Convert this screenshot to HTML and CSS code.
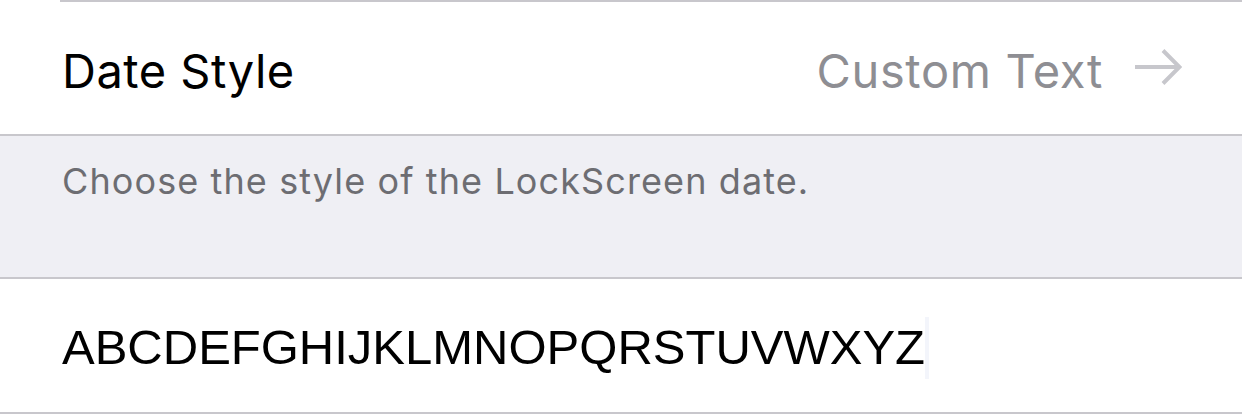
FILE: index.html
```html
<!DOCTYPE html>
<html>
<head>
<meta charset="utf-8">
<link rel="stylesheet" href="styles.css">
</head>
<body>
<div class="sep inset"></div>
<div class="row">
  <span class="label">Date Style</span>
  <span class="value">Custom Text</span>
  <svg class="arrow" width="48" height="38" viewBox="0 0 48 38"><path d="M1 19 H45.5 M29 2.5 L45.5 19 L29 35.5" fill="none" stroke="#c7c7cc" stroke-width="4" stroke-linecap="butt" stroke-linejoin="miter"/></svg>
</div>
<div class="sep"></div>
<div class="footer">Choose the style of the LockScreen date.</div>
<div class="sep"></div>
<div class="row input-row">
  <span class="field">ABCDEFGHIJKLMNOPQRSTUVWXYZ</span><span class="cursor"></span>
</div>
<div class="sep"></div>
</body>
</html>
```
FILE: styles.css
```css
html, body {
  margin: 0;
  padding: 0;
  background: #ffffff;
  width: 1242px;
  height: 414px;
  overflow: hidden;
}
.sep {
  height: 2px;
  background: #c8c7cc;
}
.sep.inset {
  margin-left: 60px;
}
.row {
  height: 132px;
  display: flex;
  align-items: center;
  padding: 0 60px 0 62px;
  background: #fff;
  font-family: Inter, Roboto, sans-serif;
}
.label {
  font-size: 47px;
  letter-spacing: 0.5px;
  color: #000;
  flex: 1;
  padding-top: 5px;
}
.value {
  font-size: 47px;
  letter-spacing: 0.65px;
  color: #8e8e93;
  margin-right: 31px;
  padding-top: 5px;
}
.arrow {
  display: block;
  margin-top: -2px;
}
.footer {
  height: 141px;
  box-sizing: border-box;
  background: #efeff4;
  padding: 23px 0 0 62px;
  font-family: Inter, Roboto, sans-serif;
  font-size: 36px;
  letter-spacing: 1.1px;
  color: #6d6d72;
}
.input-row {
  height: 133px;
}
.field {
  font-family: "Liberation Sans", Arial, sans-serif;
  font-size: 49px;
  color: #000;
  margin-top: 2px;
}
.cursor {
  width: 4px;
  height: 62px;
  background: #f3f5fb;
  margin-top: 4px;
}
```
